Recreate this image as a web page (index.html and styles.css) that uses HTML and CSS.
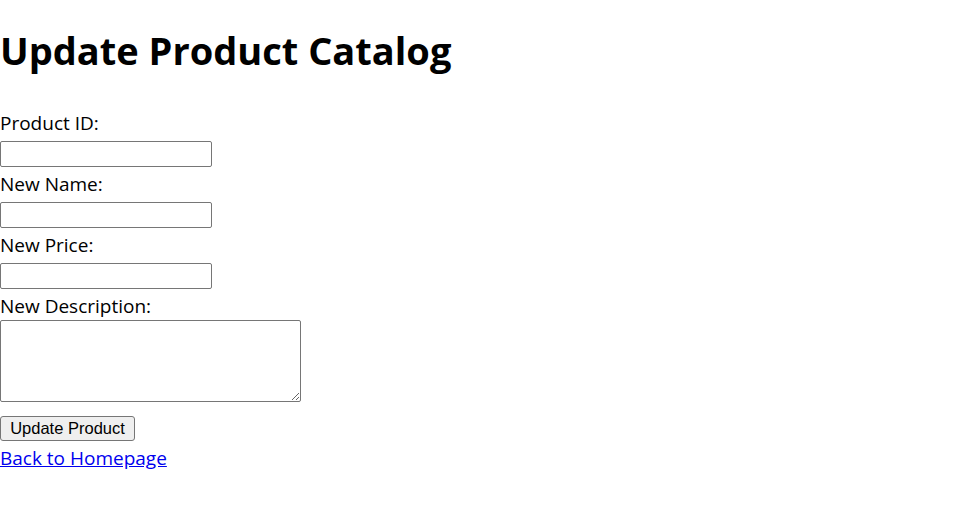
FILE: index.html
```html
<!DOCTYPE html>
<html lang="en">
<head>
    <meta charset="UTF-8">
    <meta name="viewport" content="width=device-width, initial-scale=1.0">
    <title>Update Product Catalog</title>
    <link rel="stylesheet" href="styles.css">
</head>
<body>

    <h1>Update Product Catalog</h1>

    <form class="update-form">
        <label for="productId">Product ID:</label>
        <input type="text" id="productId" class="field">

        <label for="newName">New Name:</label>
        <input type="text" id="newName" class="field">

        <label for="newPrice">New Price:</label>
        <input type="text" id="newPrice" class="field">

        <label for="newDescription">New Description:</label>
        <textarea id="newDescription" class="field-area"></textarea>

        <button type="submit" class="submit-btn">Update Product</button>
    </form>

    <a href="#" class="back-link">Back to Homepage</a>

</body>
</html>
```

FILE: styles.css
```css
body {
    font-family: "Open Sans", sans-serif;
    font-size: 19px;
    margin: 0;
    color: #000;
}
h1 {
    font-size: 38px;
    line-height: 54px;
    margin: 23px 0 34px;
}
.update-form {
    display: flex;
    flex-direction: column;
    align-items: flex-start;
}
.update-form label {
    line-height: 24px;
    margin-bottom: 6px;
}
.field {
    width: 212px;
    height: 26px;
    box-sizing: border-box;
    margin: 0 0 5px;
    border: 1px solid #767676;
    border-radius: 2px;
    padding: 1px 2px;
}
.field-area {
    width: 301px;
    height: 82px;
    box-sizing: border-box;
    margin: -4px 0 14px;
    border: 1px solid #767676;
    border-radius: 2px;
}
.submit-btn {
    font-family: "Liberation Sans", Arial, sans-serif;
    font-size: 16.5px;
    height: 25px;
    width: 135px;
    padding: 0;
    background-color: #efefef;
    border: 1px solid #767676;
    border-radius: 3px;
    color: #000;
}
.back-link {
    display: inline-block;
    margin-top: 5px;
    line-height: 24px;
    color: #0000ee;
}
```
